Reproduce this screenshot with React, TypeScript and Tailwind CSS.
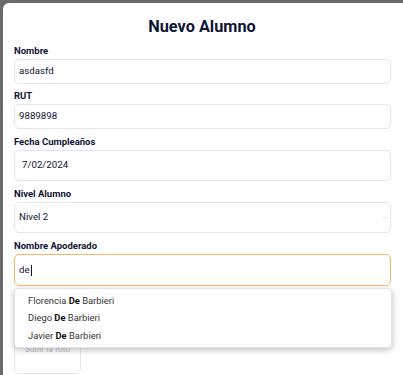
import { ChevronDown } from "lucide-react";

const labelCls = "text-[9.5px] font-bold text-[#0f1535] leading-[12px] mb-[2px]";
const inputCls =
  "w-full rounded-[5px] border border-[#e2e5ea] bg-white px-[4px] text-[9.7px] text-[#0f1535] flex items-center";

const options = ["Florencia", "Diego", "Javier"];

export default function App() {
  return (
    <div className="h-[375px] w-[403px] overflow-hidden bg-[#6a6a6c] pl-[3px] pt-[3px] font-['Roboto',sans-serif]">
      <div className="relative h-[400px] w-[420px] rounded-tl-[6px] bg-white pl-[11px] pr-[29px]">
        <h1 className="pt-[12px] pr-[4px] text-center text-[16.3px] font-bold leading-[24px] text-[#0f1535]">
          Nuevo Alumno
        </h1>

        <div className="mt-[6px] w-[377px]">
          <div className={labelCls}>Nombre</div>
          <div className={`${inputCls} h-[25px]`}>asdasfd</div>

          <div className={`${labelCls} mt-[6px]`}>RUT</div>
          <div className={`${inputCls} h-[25px]`}>9889898</div>

          <div className={`${labelCls} mt-[7px]`}>Fecha Cumpleaños</div>
          <div className={`${inputCls} h-[31px] pl-[7px]`}>7/02/2024</div>

          <div className={`${labelCls} mt-[7px]`}>Nivel Alumno</div>
          <div className={`${inputCls} h-[31px] justify-between pr-[1px]`}>
            <span>Nivel 2</span>
            <ChevronDown size={7} strokeWidth={1.5} className="text-[#9aa0a8]" />
          </div>

          <div className={`${labelCls} mt-[7px]`}>Nombre Apoderado</div>
          <div className="flex h-[32px] w-full items-center rounded-[5px] border border-[#f8b56e] bg-white px-[4px] text-[9.7px] text-[#0f1535]">
            de<span className="ml-px inline-block h-[11px] w-px bg-[#0f1535]" />
          </div>

          <div className="mt-[10px] flex h-[78px] w-[67px] items-start justify-center rounded-[5px] border border-[#e2e5ea] pt-[46px] text-[8.5px] text-[#c0c4cc]">
            Subir la foto
          </div>
        </div>

        <div className="absolute left-[11px] top-[285px] w-[378px] rounded-[4px] border border-[#e4e4e4] bg-white py-[2.5px] shadow-[0_2px_6px_rgba(0,0,0,0.25)]">
          {options.map((n) => (
            <div key={n} className="px-[13px] text-[9.4px] leading-[17.5px] text-[#333333]">
              {n} <span className="font-bold text-[#111]">De</span> Barbieri
            </div>
          ))}
        </div>
      </div>
    </div>
  );
}
